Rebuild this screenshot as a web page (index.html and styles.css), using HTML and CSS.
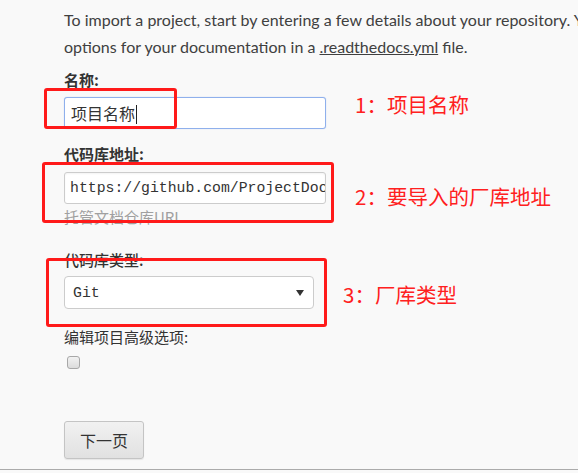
FILE: index.html
```
<!DOCTYPE html>
<html lang="zh">
<head>
<meta charset="utf-8">
<title>Import project</title>
<link rel="stylesheet" href="styles.css">
</head>
<body>
<div class="page">
  <p class="intro">To import a project, start by entering a few details about your repository. You can configure advanced<br>options for your documentation in a <a href="#" class="link">.readthedocs.yml</a> file.</p>
  <form class="form">
    <div class="field">
      <div class="label">名称:</div>
      <div class="input focused">项目名称<span class="caret"></span></div>
    </div>
    <div class="field field-repo">
      <div class="label">代码库地址:</div>
      <input class="input mono" type="text" readonly value="https://github.com/ProjectDocs/demo.git">
      <div class="help">托管文档仓库URL</div>
    </div>
    <div class="field field-type">
      <div class="label">代码库类型:</div>
      <div class="select mono"><span>Git</span><span class="arrow"></span></div>
    </div>
    <div class="field field-adv">
      <div class="label normal">编辑项目高级选项:</div>
      <div class="checkbox"></div>
    </div>
    <div class="actions">
      <div class="button">下一页</div>
    </div>
  </form>
  <div class="rule"></div>

  <div class="mark mark1"></div>
  <div class="mark mark2"></div>
  <div class="mark mark3"></div>
  <div class="note note1">1：项目名称</div>
  <div class="note note2">2：要导入的厂库地址</div>
  <div class="note note3">3：厂库类型</div>
</div>
</body>
</html>
```
FILE: styles.css
```
html, body {
  margin: 0;
  padding: 0;
  background: #f9f9f9;
  overflow: hidden;
}
.page {
  position: relative;
  width: 578px;
  height: 473px;
  overflow: hidden;
  color: #404040;
  font-family: Lato, "Noto Sans CJK SC", sans-serif;
}
.intro {
  margin: 6px 0 0 64px;
  font-size: 16px;
  line-height: 27px;
  white-space: nowrap;
  color: #404040;
}
.link {
  color: #404040;
  text-decoration: underline;
}
.form {
  padding-left: 64px;
}
.label {
  font-family: "Noto Sans CJK SC", sans-serif;
  font-size: 15px;
  line-height: 20px;
  font-weight: 700;
  color: #333;
  margin-top: 10px;
}
.label.normal {
  font-weight: 400;
}
.input {
  display: block;
  box-sizing: border-box;
  width: 262px;
  height: 32px;
  margin: 7px 0 0 0;
  background: #fff;
  border: 1px solid #ccc;
  border-radius: 3px;
  padding: 0 0 0 6px;
  font-family: "Noto Sans CJK SC", sans-serif;
  font-size: 16px;
  line-height: 30px;
  color: #333;
  white-space: nowrap;
  overflow: hidden;
  outline: none;
  box-shadow: inset 0 1px 2px rgba(0,0,0,0.05);
}
.input.focused {
  border-color: #8fb0ec;
  box-shadow: 0 0 1px #a9c2f0;
}
.caret {
  display: inline-block;
  width: 1px;
  height: 19px;
  background: #222;
  vertical-align: -4px;
  margin-left: 1px;
}
.mono {
  font-family: "Liberation Mono", "DejaVu Sans Mono", monospace;
  font-size: 14.8px;
}
.field-repo .label {
  margin-top: 15px;
}
.field-repo .input {
  margin-top: 8px;
  padding-left: 5px;
}
.help {
  font-family: "Noto Sans CJK SC", sans-serif;
  font-size: 15px;
  line-height: 21px;
  color: #a0a0a0;
  margin-top: 2px;
}
.field-type .label {
  margin-top: 23px;
  font-weight: 500;
}
.select {
  box-sizing: border-box;
  width: 250px;
  height: 33px;
  margin-top: 6px;
  background: #fff;
  border: 1px solid #ccc;
  border-radius: 4px;
  padding: 0 9px 0 8px;
  display: flex;
  align-items: center;
  justify-content: space-between;
  color: #333;
}
.arrow {
  width: 0;
  height: 0;
  border-left: 4px solid transparent;
  border-right: 4px solid transparent;
  border-top: 6px solid #333;
}
.field-adv .label {
  margin-top: 18px;
}
.checkbox {
  box-sizing: border-box;
  width: 13px;
  height: 13px;
  margin: 9px 0 0 3px;
  border: 1px solid #a8a8a8;
  border-radius: 3px;
  background: linear-gradient(#f2f2f2, #dcdcdc);
}
.actions {
  margin-top: 52px;
}
.button {
  box-sizing: border-box;
  width: 80px;
  height: 38px;
  border: 1px solid #c4c4c4;
  border-radius: 3px;
  background: linear-gradient(#f1f1f1, #e1e1e1);
  display: flex;
  align-items: center;
  justify-content: center;
  font-family: "Noto Sans CJK SC", sans-serif;
  font-size: 16px;
  color: #333;
  box-shadow: 0 1px 1px rgba(0,0,0,0.08);
}
.rule {
  margin-top: 10px;
  height: 1px;
  background: #ababab;
}
.mark {
  position: absolute;
  box-sizing: border-box;
  border: 3px solid #ff1a1a;
  border-radius: 3px;
}
.mark1 { left: 44px; top: 88px; width: 133px; height: 41px; }
.mark2 { left: 42px; top: 162px; width: 292px; height: 61px; }
.mark3 { left: 46px; top: 258px; width: 281px; height: 69px; }
.note {
  position: absolute;
  font-family: "Noto Sans CJK SC", sans-serif;
  font-size: 20.5px;
  line-height: 20px;
  color: #ff2020;
  white-space: nowrap;
}
.note1 { left: 355px; top: 94px; }
.note2 { left: 355px; top: 186px; }
.note3 { left: 343px; top: 284px; }
```
